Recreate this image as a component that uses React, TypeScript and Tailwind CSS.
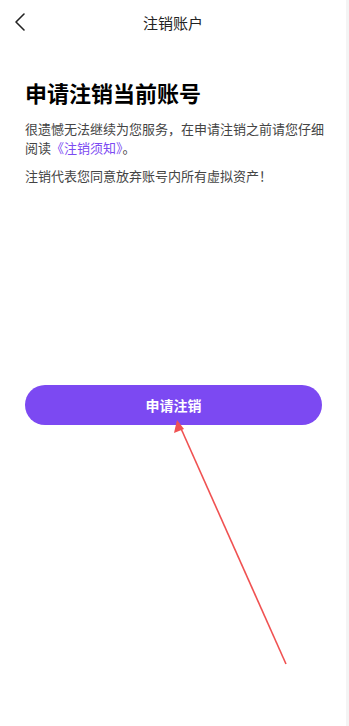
const cjk = { fontFamily: '"Noto Sans CJK SC", "Noto Sans", sans-serif' };

export default function App() {
  return (
    <div className="relative flex h-[726px] w-[349px] overflow-hidden bg-white" style={cjk}>
      <div className="flex flex-1 flex-col">
        <header className="relative flex h-[44px] items-center justify-center">
          <button className="absolute left-[12px] top-[12px] text-[#222]">
            <svg width="16" height="20" viewBox="0 0 16 20" fill="none">
              <polyline points="12,2 4,10 12,18" stroke="currentColor" strokeWidth="1.6" strokeLinecap="round" strokeLinejoin="round" />
            </svg>
          </button>
          <h1 className="text-[15px] leading-none text-[#222]">注销账户</h1>
        </header>

        <section className="pl-[25px] pr-[18px] pt-[33px]">
          <h2 className="text-[22px] font-bold leading-[30px] text-black">申请注销当前账号</h2>
          <p className="mt-[12px] text-[13px] leading-[19px] text-[#444]">
            很遗憾无法继续为您服务，在申请注销之前请您仔细阅读<span className="text-[#7c4af2]">《注销须知》</span>。
          </p>
          <p className="mt-[9px] text-[13px] leading-[19px] text-[#444]">
            注销代表您同意放弃账号内所有虚拟资产！
          </p>
        </section>

        <div className="mt-[200px] pl-[25px] pr-[24px]">
          <button className="flex h-[40px] w-full items-center justify-center rounded-full bg-[#7c49f2] text-[14px] font-bold text-white">
            申请注销
          </button>
        </div>
      </div>
      <div className="w-[3px] bg-[#f4f4f4]" />

      <svg className="pointer-events-none absolute left-0 top-0" width="349" height="726">
        <line x1="286" y1="664" x2="179" y2="424" stroke="#f05252" strokeWidth="1.6" />
        <polygon points="177,420 174,433 184,429" fill="#f05252" />
      </svg>
    </div>
  );
}
